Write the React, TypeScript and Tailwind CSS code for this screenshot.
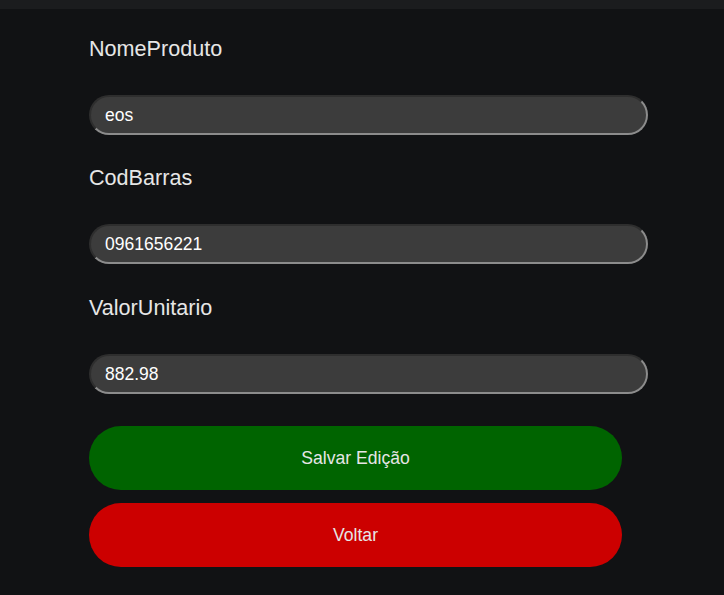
import React from "react";

const font = { fontFamily: '"Liberation Sans", Arial, sans-serif' };

function Field({ label, value, mt }: { label: string; value: string; mt: string }) {
  return (
    <div className={`flex flex-col ${mt}`}>
      <label className="block text-[21.6px] leading-[24px] text-[#e6e6e6]">{label}</label>
      <input
        readOnly
        value={value}
        className="mt-[34px] h-[40px] w-[559px] rounded-[20px] border-2 border-t-[#2e2e2e] border-l-[#2e2e2e] border-b-[#8c8c8c] border-r-[#8c8c8c] bg-[#3c3c3c] px-[14px] text-[17.5px] text-white outline-none"
        style={font}
      />
    </div>
  );
}

export default function App() {
  return (
    <div className="min-h-[595px] w-full bg-[#111214]" style={font}>
      <div className="h-[9px] w-full bg-[#1b1c1e]" />
      <div className="ml-[89px] flex flex-col pt-[28px]">
        <Field label="NomeProduto" value="eos" mt="mt-0" />
        <Field label="CodBarras" value="0961656221" mt="mt-[31px]" />
        <Field label="ValorUnitario" value="882.98" mt="mt-[32px]" />
        <button className="mt-[32px] h-[64px] w-[533px] rounded-full bg-[#006400] text-[17.6px] text-[#e6e6e6]" style={font}>
          Salvar Edição
        </button>
        <button className="mt-[13px] h-[64px] w-[533px] rounded-full bg-[#cc0000] text-[17.6px] text-[#e6e6e6]" style={font}>
          Voltar
        </button>
      </div>
    </div>
  );
}
